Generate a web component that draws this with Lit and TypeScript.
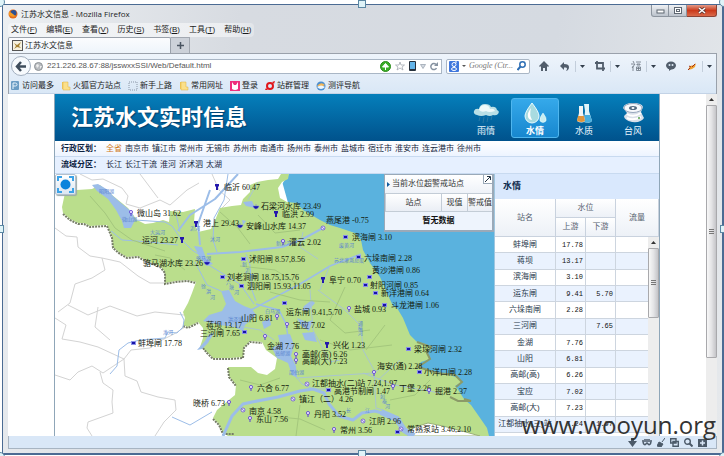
import { LitElement, html, svg, css } from "lit";
import { customElement, property } from "lit/decorators.js";
import { classMap } from "lit/directives/class-map.js";

type Kind = "pin" | "pinlight" | "gate" | "basin" | "ring";
type Station = [string, number, number, Kind, number, number];

// label, label x, label middle y, marker kind, marker x, marker y
const STATIONS: Station[] = [
  ["临沂 60.47", 224, 187, "pin", 217, 187],
  ["石梁河水库 23.49", 261, 206, "basin", 256, 207],
  ["临洪 2.99", 282, 214, "pin", 276, 214],
  ["燕尾港 -0.75", 326, 220, "ring", 323, 228],
  ["安峰山水库 14.37", 246, 226, "basin", 240, 226],
  ["港上 29.43", 203, 223, "pin", 196, 224],
  ["微山岛 31.62", 137, 213, "pinlight", 131, 213],
  ["运河 23.27", 142, 240, "pin", 182, 240],
  ["滨海闸 3.10", 352, 237, "gate", 345, 237],
  ["灌云 2.02", 289, 242, "pinlight", 283, 242],
  ["沭阳闸 8.57,8.56", 249, 259, "gate", 243, 259],
  ["六垛南闸 2.28", 364, 258, "gate", 358, 257],
  ["黄沙港闸 0.86", 372, 270, "gate", 369, 277],
  ["骆马湖水库 23.26", 143, 263, "basin", 207, 263],
  ["刘老涧闸 18.75,15.76", 227, 277, "gate", 222, 277],
  ["泗阳闸 15.93,11.05", 247, 286, "gate", 241, 286],
  ["阜宁 0.70", 329, 280, "pin", 323, 280],
  ["射阳河闸 0.85", 370, 285, "gate", 365, 285],
  ["新洋港闸 0.64", 381, 293, "gate", 375, 293],
  ["斗龙港闸 1.06", 391, 305, "gate", 384, 305],
  ["运东闸 9.41,5.70", 286, 312, "gate", 284, 303],
  ["盐城 0.93", 354, 309, "pinlight", 349, 309],
  ["山阳 6.81", 241, 318, "pinlight", 277, 317],
  ["宝应 7.02", 293, 325, "pinlight", 287, 325],
  ["蒋坝 13.17", 206, 325, "gate", 244, 332],
  ["三河闸 7.65", 200, 333, "gate", 244, 332],
  ["蚌埠闸 17.78", 138, 343, "gate", 133, 343],
  ["金湖 7.76", 267, 346, "pinlight", 265, 337],
  ["兴化 1.23", 333, 345, "pin", 327, 345],
  ["高邮(高) 6.26", 302, 354, "pinlight", 296, 355],
  ["高邮(大) 7.23", 302, 361, "pinlight", 296, 361],
  ["梁垛河闸 2.32", 414, 349, "gate", 408, 349],
  ["海安(通) 2.28", 377, 366, "pinlight", 374, 373],
  ["小洋口闸 2.28", 424, 372, "gate", 419, 372],
  ["江都抽水(二)站 7.24,1.97", 312, 383, "ring", 307, 384],
  ["高港节制闸 1.47", 334, 391, "gate", 328, 390],
  ["丁堡 2.26", 399, 388, "pinlight", 393, 387],
  ["掘港 2.37", 435, 391, "pinlight", 429, 391],
  ["六合 6.77", 257, 388, "pinlight", 251, 388],
  ["镇江（二）4.26", 299, 399, "ring", 293, 399],
  ["晓桥 6.73", 193, 403, "pinlight", 229, 403],
  ["南京 4.58", 249, 411, "ring", 243, 410],
  ["东山 7.56", 256, 419, "pinlight", 250, 419],
  ["丹阳 3.52", 314, 414, "pinlight", 308, 414],
  ["江阴 2.96", 369, 421, "ring", 363, 421],
  ["常州 3.56", 340, 430, "pinlight", 334, 430],
  ["常熟泵站 3.46,2.10", 407, 429, "gate", 397, 432],
];

const WATERS: [string, number, number][] = [
  ["昭阳湖", 99, 193], ["微山湖", 122, 221], ["大运河", 150, 234], ["沂河", 190, 230],
  ["沭河", 210, 241], ["骆马湖", 196, 260], ["新沂河", 276, 245], ["废黄河", 339, 247],
  ["苏北灌溉总渠", 334, 262], ["白马湖", 265, 313], ["洪泽湖", 228, 321], ["高邮湖", 275, 355],
  ["邵伯湖", 289, 374], ["淮河", 163, 334], ["徐", 201, 288], ["洪", 206, 293], ["河", 210, 299],
  ["新", 242, 266], ["沂", 245, 272], ["河", 249, 278], ["六", 226, 284], ["塘", 229, 289], ["河", 234, 294],
  ["通", 358, 325], ["榆", 358, 330], ["河", 358, 335], ["如", 380, 398], ["泰", 382, 403], ["河", 385, 408],
  ["长", 346, 412], ["江", 365, 412],
];

const LAND =
  "M92 189 L77 190 65 193 62 207 63 213 70 219 78 223 84 223 90 226 107 225 112 237 113 247 120 253 127 257 138 256 147 261 160 266 165 272 165 283 176 281 187 280 196 282 192 293 188 303 183 312 185 318 183 325 188 327 198 322 203 328 203 338 200 347 207 352 213 358 230 358 243 357 244 347 250 341 262 342 266 350 277 358 275 369 267 375 258 373 251 367 228 367 229 376 236 385 235 395 224 404 217 410 213 418 219 424 223 433 228 436 489 436 487 428 478 415 471 405 464 399 457 388 455 386 462 382 458 378 450 375 437 373 427 370 418 367 421 362 430 359 427 353 431 347 423 343 417 342 410 335 403 318 397 308 393 306 387 293 380 277 370 263 363 250 361 240 355 233 340 228 330 225 320 220 303 210 297 203 287 202 280 198 278 188 282 182 288 179 289 174 281 174 278 179 268 180 257 182 250 185 250 192 243 199 241 205 232 206 220 208 216 218 211 229 198 232 194 222 195 209 183 212 170 211 169 222 163 220 153 223 145 224 137 220 128 208 112 195 100 185Z";

const MENUS: [string, string][] = [["文件", "F"], ["编辑", "E"], ["查看", "V"], ["历史", "S"], ["书签", "B"], ["工具", "T"], ["帮助", "H"]];

const LEVELS: [string, string, string][] = [
  ["蚌埠闸", "17.78", ""], ["蒋坝", "13.17", ""], ["滨海闸", "3.10", ""], ["运东闸", "9.41", "5.70"],
  ["六垛南闸", "2.28", ""], ["三河闸", "", "7.65"], ["金湖", "7.76", ""], ["山阳", "6.81", ""],
  ["高邮(高)", "6.26", ""], ["宝应", "7.02", ""], ["高邮(大)", "7.23", ""], ["江都抽水(三)站", "7.24", "1.97"],
];

const reset = css`
  * { box-sizing: border-box; }
  :host { font-family: "Liberation Sans", "Noto Sans CJK SC", sans-serif; font-size: 8px; line-height: 12px; }
  button { font: inherit; color: inherit; background: none; border: 0; padding: 0; margin: 0; }
  a { color: inherit; text-decoration: none; }
  svg { display: block; }
  table { border-collapse: separate; border-spacing: 0; table-layout: fixed; }
`;

@customElement("side-scroll")
class SideScroll extends LitElement {
  @property({ type: Number }) size = 70;
  static styles = [reset, css`
    :host { display: flex; flex-direction: column; width: 11px; background: #ededed; }
    .up { height: 11px; display: flex; align-items: center; justify-content: center; }
    .thumb { border: 1px solid #a9a9ac; border-radius: 1px; background: linear-gradient(90deg, #f8f8f8, #e4e4e6 50%, #c4c4c8);
      display: flex; align-items: center; justify-content: center; }
  `];
  render() {
    return html`<div class="up"><svg width="5" height="3"><path d="M0 3 2.500 0 5 3Z" fill="#333" /></svg></div>
      <div class="thumb" style="height:${this.size}%"><svg width="5" height="6"><path d="M0 .5H5M0 2.500H5M0 4.500H5" stroke="#777" /></svg></div>`;
  }
}

@customElement("water-map")
class WaterMap extends LitElement {
  static styles = [reset, css`
    :host { display: block; position: relative; overflow: hidden; background: #fff; }
    .canvas { width: 100%; height: 100%; }
    .label { font-family: "Liberation Serif", "Noto Sans CJK SC", serif; font-size: 8px; fill: #14200c; }
    .water { font-size: 5px; fill: #5b86cf; }
    .full { position: absolute; left: 0; top: 0; width: 21px; height: 21px; border: 1px solid #b5c0cc; border-radius: 2px;
      background: linear-gradient(#fff, #dbe6f2); display: flex; align-items: center; justify-content: center; box-shadow: 1px 1px 1px #9aa; }
    .alert { position: absolute; right: 0; top: 0; width: 110px; border: 1px solid #9aa9b8; border-width: 1px 2px 2px 1px; background: #fff; color: #333; }
    .alert-title { height: 18px; display: flex; align-items: center; padding-left: 2px; background: linear-gradient(#fff, #eef2f8); position: relative; }
    .arrow { margin-right: 2px; }
    .collapse { position: absolute; right: 0; top: 0; width: 9px; height: 9px; border: solid #9aa9b8; border-width: 0 0 1px 1px; background: #fff; }
    table { width: 100%; text-align: center; }
    th, td { padding: 0; white-space: nowrap; }
    th { height: 19px; font-weight: 400; border: solid #c3ccd6; border-width: 1px 0 1px 1px; background: linear-gradient(#fff, #eaeef5); }
    .c1 { width: 56px; } .c2 { width: 26px; }
    td { height: 18px; font-weight: 700; color: #111; background: #eef4fd; }
  `];

  marker(kind: Kind, x: number, y: number) {
    const t = `translate(${x} ${y})`;
    switch (kind) {
      case "gate": return svg`<g transform=${t}><rect x="-2" y="-2" width="5" height="4" fill="#8a8fe8" /><rect x="-1" y="-1" width="3" height="2" fill="#1713a8" /></g>`;
      case "basin": return svg`<path transform=${t} d="M-3-1H3Q2 2 0 2T-3-1ZM-1-2H1" fill="#1713a8" stroke="#6a6ee0" stroke-width=".5" />`;
      case "ring": return svg`<g transform=${t} stroke="#6a55d0" stroke-width=".8"><circle r="2" fill="#f4f2ff" /><path d="M-1.500-1 1.500 1" /></g>`;
      case "pin": return svg`<path transform=${t} d="M-2-3H2V-1L1 0V3H-1V0L-2-1Z" fill="#2419ac" />`;
      default: return svg`<g transform=${t}><path d="M0 0V3" stroke="#5a3fd0" /><circle cy="-1" r="1.600" fill="#e6dcff" stroke="#5a3fd0" stroke-width=".8" /></g>`;
    }
  }

  render() {
    return html`
      <svg class="canvas" viewBox="55 174 439 262" preserveAspectRatio="xMinYMin slice" role="img" aria-label="江苏水情地图">
        <path d="M280 174H2000V900H489V436L400 436 340 300 290 210Z" fill="#5ab2de" />
        <path d="M280 174H289L278 190 280 200 240 240H210V174Z" fill="#fff" />
        <g fill="none" stroke="#d3d3d3" stroke-width="1">
          <path d="M80 174 92 180 103 179 122 188 128 196 126 204 140 208 160 200 170 205 178 198 187 190 199 183" />
          <path d="M140 174 152 190 158 198 M212 174 219 190 230 200 222 208" />
          <path d="M55 228 66 236 77 237 78 247 90 256 102 258 105 270 92 278 75 284 70 303 58 312M102 258 120 262 138 276 150 283 165 283" />
          <path d="M62 339 80 342 98 347 124 359 103 373 92 366 78 372 70 380 55 375M62 339 66 325 55 318M100 372 103 383 113 390 112 402 113 413 88 422 87 428 92 436M124 359 125 376 137 381 141 392 158 397 175 400 176 410 164 422 155 436" />
          <path d="M124 359 131 350 150 348 160 341 174 334 185 327M68 305 88 315 110 306 137 316 155 312 184 315M98 307 95 327 110 340" />
        </g>
        <path d=${LAND} fill="#bade8c" />
        <path d="M63 213 70 219 78 223 84 223 90 226 107 225 112 237 113 247 120 253 127 257 138 256 147 261 160 266 165 272 165 283 176 281 187 280 196 282M183 325 188 327 198 322M203 347 207 352 213 358 230 358 243 357 244 347 250 341 262 342M228 367 229 376 236 385M213 418 219 424 223 433 234 433" transform="translate(0 1)" fill="none" stroke="#757d65" stroke-width="2" stroke-dasharray="2 1" />
        <path d="M417 342 431 347 427 353 430 359 418 367 437 373 455 375 462 382 456 387M450 397 458 401 471 401 464 399" fill="none" stroke="#8b9a68" stroke-width="2" />
        <g fill="#9cbde8">
          <path d="M92 185 98 184 108 190 113 196 121 203 132 212 135 220 131 228 124 228 122 221 116 210 108 199 97 191Z" />
          <path d="M194 246 202 247 206 258 213 264 207 266 200 258Z" />
          <path d="M221 291 229 290 235 301 244 306 252 309 256 315 245 325 243 331 234 327 220 325 203 321 209 315 222 311 226 304Z" />
          <path d="M278 335 290 334 294 345 291 356 296 366 297 378 292 375 288 363 277 358 272 348 280 344Z" />
          <path d="M304 306 312 300 315 303 308 311 302 311ZM297 318 307 322 313 320 309 331 301 326ZM302 333 314 332 317 342 305 340ZM262 322 270 318 271 325 264 329Z" />
          <path d="M243 202 252 201 255 208 246 206ZM242 220 246 221 243 225Z" />
          <path d="M197 350 205 341 209 334 214 333 208 343 202 349Z" />
        </g>
        <path d="M408 436 412 428 428 423 443 426 462 431 480 436Z" fill="#fff" stroke="#9ab077" />
        <g fill="none" stroke="#9cbde8" stroke-linejoin="round">
          <path d="M110 374 117 366 119 350 128 343 140 340 165 338 168 332 177 333 183 327 184 320 180 312" stroke-width="1" />
          <path d="M135 220 150 221 165 222 172 226 181 239 192 250 203 257" />
          <path d="M238 174 215 199 190 215 178 231M210 190 198 224 200 245" stroke-width="2" />
          <path d="M228 174 224 200 214 218 213 240 217 252M180 232 176 214M111 231 122 240 150 242 178 245" />
          <path d="M207 254 240 252 282 247 301 240 323 228" stroke-width="2" />
          <path d="M246 254 250 265 252 290 256 301M195 262 207 285 221 291M207 264 240 284 254 304" />
          <path d="M251 310 300 284 330 266 361 254M256 304 279 310 286 324 288 337" stroke-width="1.500" />
          <path d="M232 325 260 330 274 340M297 378 302 384 313 389 330 389M258 182 248 200M318 259 300 247 303 232M318 290 345 310 361 326 363 350 374 370 376 408 383 410M296 378 374 373 378 370M330 265 320 290M363 373 395 385 440 393M310 290 313 330 330 362 340 360M400 360 378 380" stroke-width="1" stroke="#a9c6cf" />
          <path d="M223 436 232 416 243 404 252 402 278 397 300 391 313 389 324 393 329 404 339 416 353 420 362 413 375 411 393 416 399 424 409 434" stroke-width="3" />
          <path d="M381 412 397 419 404 430 414 436" stroke-width="6" />
          <path d="M172 417 190 425 212 412" stroke-width="1" />
        </g>
        <g fill="none" stroke="#a4c77d" stroke-width="1">
          <path d="M90 196 105 213 115 228 132 240 165 251M155 255 170 258 185 270M220 212 238 228 250 244M258 215 275 233 300 230M240 266 275 270 304 288M270 292 300 300 330 302M345 287 330 320 345 333 370 330M385 325 366 350M240 380 260 385 280 378M320 340 350 350 392 345M260 415 300 419 325 430M300 405 296 436M430 380 415 395 390 400" />
        </g>
        ${WATERS.map(([n, x, y]) => svg`<text class="water" x=${x} y=${y}>${n}</text>`)}
        ${STATIONS.map(([n, x, y, k, mx, my]) => svg`${this.marker(k, mx, my)}<text class="label" x=${x} y=${y + 3}>${n}</text>`)}
        ${this.marker("ring", 401, 429)}
      </svg>
      <button class="full" aria-label="全图">
        <svg width="17" height="17" viewBox="0 0 17 17"><circle cx="8.500" cy="8.500" r="5" fill="#0c84dc" /><path d="M1 5V1H5M12 1H16V5M16 12V16H12M5 16H1V12" fill="none" stroke="#3ba3e8" stroke-width="2" /></svg>
      </button>
      <section class="alert">
        <div class="alert-title">
          <svg class="arrow" width="3" height="5"><path d="M0 0 3 2.500 0 5Z" fill="#125a9c" /></svg>当前水位超警戒站点
          <button class="collapse" aria-label="收起"><svg width="8" height="8"><path d="M1 7 6 2M3 1.500H6.500V5" fill="none" stroke="#234" /></svg></button>
        </div>
        <table><thead><tr><th class="c1">站点</th><th class="c2">现值</th><th>警戒值</th></tr></thead>
          <tbody><tr><td colspan="3">暂无数据</td></tr></tbody></table>
      </section>`;
  }
}

@customElement("level-panel")
class LevelPanel extends LitElement {
  static styles = [reset, css`
    :host { display: flex; flex-direction: column; background: #fff; color: #26374a; border-left: 1px solid #9fc6df; overflow: hidden; position: relative; }
    h2 { margin: 0; height: 25px; flex: none; font-size: 9px; line-height: 25px; padding-left: 8px; background: #d9e8fd; color: #0c2a4c; }
    .body { flex: 1; position: relative; padding-bottom: 3px; min-height: 0; }
    table { width: 100%; height: 100%; }
    th { font-weight: 400; padding: 0; height: 19px; border: solid #c9d2de; border-width: 0 1px 1px 0; background: linear-gradient(#fff, #edf1f7); color: #55606e; }
    td { padding: 0; border: solid #cdd5df; border-width: 0 1px 1px 0; line-height: 12px; text-align: center; white-space: nowrap; }
    .num { text-align: right; padding-right: 2px; font-family: "Liberation Mono", monospace; font-size: 7px; color: #111; }
    tr.alt td { background: #eaf2fe; }
    .c1 { width: 61px; } .c2 { width: 30px; }
    side-scroll { position: absolute; right: 0; top: 38px; bottom: 0; }
  `];
  render() {
    return html`<h2>水情</h2>
      <div class="body">
        <table>
          <colgroup><col class="c1" /><col class="c2" /><col class="c2" /><col /></colgroup>
          <thead><tr><th rowspan="2">站名</th><th colspan="2">水位</th><th rowspan="2">流量</th></tr><tr><th>上游</th><th>下游</th></tr></thead>
          <tbody>${LEVELS.map(([n, a, b], i) => html`<tr class=${classMap({ alt: i % 2 === 1 })}><td>${n}</td><td class="num">${a}</td><td class="num">${b}</td><td></td></tr>`)}</tbody>
        </table>
        <side-scroll .size=${35}></side-scroll>
      </div>`;
  }
}

@customElement("water-site")
class WaterSite extends LitElement {
  static styles = [reset, css`
    :host { display: flex; flex-direction: column; background: #fff; border: solid #8fa6b8; border-width: 0 1px; overflow: hidden; }
    header { height: 47px; flex: none; display: flex; align-items: center; justify-content: space-between; padding: 0 2px 0 16px; color: #fff;
      background: linear-gradient(#057fbb, #00528c); }
    h1 { margin: 0; font-size: 22px; line-height: 30px; font-weight: 700; text-shadow: 1px 1px 1px #00406f; white-space: nowrap; }
    nav { display: flex; gap: 1px; }
    nav a { width: 48px; height: 40px; display: flex; flex-direction: column; align-items: center; font-size: 9px; line-height: 12px; padding-top: 2px; color: #e8f4fc; border-radius: 3px; border: 1px solid transparent; }
    nav a.on { background: linear-gradient(#35a9ea, #1787cf); border-color: #4fb6ee; font-weight: 700; color: #fff; }
    .areas { height: 16px; flex: none; display: flex; align-items: center; gap: 3px; padding-left: 6px; border-bottom: 1px solid #c8daf0; color: #16263c; background: linear-gradient(#fff, #edf4ff); white-space: nowrap; }
    .areas.low { background: #e6f0ff; height: 17px; }
    .areas b { width: 42px; color: #0b2140; }
    .areas .on { color: #d0781a; }
    .main { flex: 1; min-height: 0; display: flex; }
    water-map { flex: 1; min-width: 0; }
    level-panel { width: 165px; }
  `];
  render() {
    const cities = ["全省", "南京市", "镇江市", "常州市", "无锡市", "苏州市", "南通市", "扬州市", "泰州市", "盐城市", "宿迁市", "淮安市", "连云港市", "徐州市"];
    return html`
      <header><h1>江苏水文实时信息</h1>
        <nav>
          <a href="#rain"><svg width="28" height="24" viewBox="0 0 28 24"><path d="M5 14q-4-1-3-4t5-2q1-5 6-5 5 0 6 3 5-1 6 3 3 1 1 4-2 2-5 1-3 2-7 0-5 2-9 0Z" fill="#b9dfe6" /><path d="M7 9q1-5 6-5 4 0 5 4 4-1 5 2-6 2-9 0-4 2-7-1Z" fill="#eefafa" /><path d="M8 16 7 20M12 16 11 22M16 16 15 21M20 15 19 19" stroke="#2a79a5" /></svg>雨情</a>
          <a class="on" href="#level"><svg width="28" height="24" viewBox="0 0 28 24"><path d="M11 2Q18 11 18 15A7 7 0 0 1 4 15Q4 11 11 2Z" fill="#a8dbe0" stroke="#e7fbff" /><path d="M10 7Q6 12 7 16 8 19 11 19 8 14 10 7Z" fill="#fff" /><path d="M22 12Q26 17 25 20 22 23 19 20 18 17 22 12Z" fill="#c9edf0" stroke="#eaffff" stroke-width=".5" /></svg>水情</a>
          <a href="#quality"><svg width="28" height="24" viewBox="0 0 28 24"><path d="M14 3H19V10L22 20Q20 23 14 21L15 10Z" fill="#dff4fa" /><path d="M15 14H20L22 20Q19 23 14 21Z" fill="#46aede" /><path d="M9 5H13V12L15 20Q12 23 7 20L9 12Z" fill="#f1f5f5" /><path d="M8 15H14L15 20Q12 22 7 20Z" fill="#e0953c" /></svg>水质</a>
          <a href="#typhoon"><svg width="28" height="24" viewBox="0 0 28 24"><path d="M4 7Q5 2 14 2T24 6L22 11 25 17Q22 22 13 21 5 19 5 15L8 12Z" fill="#d9dfe9" /><ellipse cx="14" cy="7" rx="9" ry="4.500" fill="#f7f9fc" stroke="#97a7bd" /><ellipse cx="14" cy="7" rx="4" ry="2" fill="#54697f" /><ellipse cx="14" cy="7" rx="1.500" ry="1" fill="#fff" /><path d="M8 13Q14 17 22 12M8 17Q14 20 22 16" fill="none" stroke="#fff" stroke-width="2" /><circle cx="20" cy="17" r="1" fill="#55a34a" /></svg>台风</a>
        </nav>
      </header>
      <div class="areas"><b>行政区划：</b>${cities.map((c, i) => html`<a href="#c${i}" class=${classMap({ on: i === 0 })}>${c}</a>`)}</div>
      <div class="areas low"><b>流域分区：</b>${["长江", "长江干流", "淮河", "沂沭泗", "太湖"].map((c, i) => html`<a href="#b${i}">${c}</a>`)}</div>
      <div class="main"><water-map></water-map><level-panel></level-panel></div>`;
  }
}

@customElement("app-root")
class AppRoot extends LitElement {
  static styles = [reset, css`
    :host { display: block; }
    .stage { position: relative; min-height: 100vh; display: flex; padding: 4px 0 1px 2px; background: #fff; overflow: hidden; }
    .window { flex: 1; min-width: 0; display: flex; flex-direction: column; border: solid #4b6b93; border-width: 1px 2px 2px 1px; padding: 0 5px 4px 5px;
      background: linear-gradient(100deg, #eceff2, #d7dbe1 30%, #d5dae1 70%, #e6e9ec); color: #1c1c1c; }
    .title { height: 18px; display: flex; justify-content: space-between; font-family: "Open Sans", "Noto Sans CJK SC", sans-serif; }
    .name { display: flex; align-items: center; gap: 3px; }
    .controls { display: flex; height: 12px; }
    .controls button { width: 18px; border: 1px solid #8c949e; border-top: 0; border-left-width: 0; background: linear-gradient(#eef0f3, #bcc3cc); display: flex; align-items: center; justify-content: center; }
    .controls .min { border-left-width: 1px; border-radius: 0 0 0 3px; }
    .controls .close { width: 30px; border-radius: 0 0 3px 0; background: linear-gradient(#e39a87, #cb3a1b 50%, #d9694a); border-color: #8d4234; }
    .menu { height: 14px; display: flex; align-items: center; gap: 9px; padding-left: 3px; width: 246px; background: linear-gradient(90deg, #f3f5f7, #eceef1 90%, #e2e5e9); border-radius: 4px; }
    .menu button, .marks button { white-space: nowrap; }
    .tabs { display: flex; height: 16px; align-items: stretch; }
    .tab { width: 163px; display: flex; align-items: center; gap: 2px; padding-left: 3px; background: linear-gradient(#fbfcfe, #eef4fb); border: 1px solid #9aa1ab; border-bottom: 0; border-radius: 2px 2px 0 0; }
    .plus { width: 19px; border: 1px solid #a3a9b2; border-left: 0; border-bottom: 0; display: flex; align-items: center; justify-content: center; background: #ccd1d9; }
    .chrome { border: 1px solid #9aa1ab; border-bottom: 0; background: linear-gradient(#eef4fb, #d9e7f6); }
    .bar { height: 24px; display: flex; align-items: center; padding: 0 4px 0 2px; }
    .back { width: 20px; height: 20px; border: 1px solid #a2afbf; border-radius: 10px; background: #f7fafd; display: flex; align-items: center; justify-content: center; z-index: 1; }
    .address { flex: 1; min-width: 0; height: 15px; margin-left: -4px; margin-right: 4px; padding: 0 3px 0 6px; border: 1px solid #a9b6c5; background: #fff; display: flex; align-items: center; gap: 4px; }
    input { border: 0; padding: 0; margin: 0; background: none; font: inherit; min-width: 0; outline: 0; flex: 1; }
    .address input { color: #555; }
    .search { width: 84px; height: 15px; border: 1px solid #a9b6c5; border-radius: 2px; background: #fff; display: flex; align-items: center; gap: 3px; padding: 0 3px 0 2px; }
    .search input { font-style: italic; color: #777; font-family: "Liberation Serif", "Noto Sans CJK SC", serif; }
    .tools { display: flex; align-items: center; width: 182px; justify-content: space-between; padding-left: 9px; }
    .drop { display: flex; align-items: center; gap: 5px; }
    .sep { padding-left: 4px; border-left: 1px solid #c3cedb; height: 11px; display: flex; align-items: center; }
    .marks { height: 16px; display: flex; align-items: center; gap: 7px; padding-left: 1px; border-bottom: 1px solid #c3d3e6; }
    .marks button { display: flex; align-items: center; gap: 2px; }
    .view { flex: 1; min-height: 0; display: flex; background: #fff; }
    water-site { flex: 1; margin: 0 46px 0 46px; min-width: 0; }
    .status { height: 13px; display: flex; justify-content: flex-end; align-items: center; gap: 5px; padding-right: 9px; background: #d9e7f7; border: 1px solid #a7b4c2; border-top: 0; }
    .mark { position: absolute; right: 8px; bottom: 13px; font-family: "Open Sans", sans-serif; font-size: 24px; line-height: 36px; color: #333; }
    .handle { position: absolute; width: 8px; height: 8px; border: 1px solid #5b87a3; background: #dff3f8; }
    .round { border-radius: 5px; width: 10px; height: 10px; }
    .n { top: 0; left: 50%; margin-left: -4px; } .s { bottom: -2px; left: 50%; margin-left: -4px; }
    .w { left: -4px; top: 50%; margin-top: -3px; } .e { right: -4px; top: 50%; margin-top: -3px; }
    .nw { left: -5px; top: -3px; } .ne { right: -5px; top: -3px; } .sw { left: -5px; bottom: -6px; } .se { right: -5px; bottom: -6px; }
  `];

  drop(icon: unknown) {
    return html`<div class="drop">${icon}<button class="sep" aria-label="更多"><svg width="5" height="3"><path d="M0 0H5L2.500 3Z" fill="#333f4c" /></svg></button></div>`;
  }

  render() {
    const folder = svg`<path d="M1 1H5L6 2V8H1Z" fill="#f0c95c" /><path d="M2 1H7V6H9V9H2Z" fill="#fbe08a" stroke="#dcb040" stroke-width=".5" />`;
    const marks: [string, unknown][] = [
      ["访问最多", svg`<rect x="1" y="0" width="8" height="9" rx="1" fill="#6a9cc4" /><path d="M3 8V2H5.500A1.500 1.500 0 0 1 5.500 5H3" stroke="#e8f4fc" fill="none" />`],
      ["火狐官方站点", folder],
      ["新手上路", svg`<rect x="1" y="1" width="8" height="8" fill="none" stroke="#8b97a6" stroke-dasharray="1 1" />`],
      ["常用网址", folder],
      ["登录", svg`<rect width="10" height="10" fill="#ee2f7d" /><path d="M2 1 4 4 6 4 8 1V8Q5 10 2 8Z" fill="#fff" />`],
      ["站群管理", svg`<circle cx="5" cy="5" r="3" fill="none" stroke="#e0161b" stroke-width="2" /><path d="M7 1 10 0 9 3M0 9 1 7 3 9Z" fill="#e0161b" />`],
      ["测评导航", svg`<circle cx="5" cy="5" r="4.500" fill="#4b8ed0" /><path d="M1 5Q5 0 9 4L5 6Z" fill="#f3b658" /><path d="M1 6Q5 3 9 6 5 10 1 6Z" fill="#eef6fc" />`],
    ];
    return html`
      <div class="stage">
        <div class="window">
          <div class="title">
            <div class="name"><svg width="10" height="10"><circle cx="5" cy="5" r="4.500" fill="#e36b1c" /><circle cx="5.500" cy="4" r="3" fill="#2a4f94" /><path d="M1 3Q3 3 5 5T8 7Q4 9 1 6Z" fill="#f49b26" /></svg>江苏水文信息 - Mozilla Firefox</div>
            <div class="controls">
              <button class="min" aria-label="最小化"><svg width="9" height="6"><rect x="1" y="2" width="7" height="3" fill="#fff" stroke="#5d6670" /></svg></button>
              <button aria-label="最大化"><svg width="8" height="7"><rect x=".5" y=".5" width="7" height="6" fill="#fff" stroke="#5d6670" /><rect x="2.500" y="2.500" width="3" height="2" fill="none" stroke="#5d6670" /></svg></button>
              <button class="close" aria-label="关闭"><svg width="8" height="7"><path d="M1 1 7 6M7 1 1 6" stroke="#5f3a36" stroke-width="3" /><path d="M1 1 7 6M7 1 1 6" stroke="#fff" stroke-width="1.500" /></svg></button>
            </div>
          </div>
          <div class="menu">${MENUS.map(([n, k]) => html`<button>${n}(<u>${k}</u>)</button>`)}</div>
          <div class="tabs">
            <button class="tab"><svg width="11" height="11"><rect x=".5" y=".5" width="10" height="10" fill="#f6f1e0" stroke="#555" /><path d="M2 3 5 5 9 2 7 6 9 8 5 7 2 9 4 6Z" fill="#a68232" /></svg>江苏水文信息</button>
            <button class="plus" aria-label="新标签页"><svg width="7" height="7"><path d="M3.500 0V7M0 3.500H7" stroke="#4a5562" stroke-width="1.500" /></svg></button>
          </div>
          <div class="chrome">
            <div class="bar">
              <button class="back" aria-label="后退"><svg width="12" height="11"><path d="M6 1 2 5.500 6 10M2 5.500H11" stroke="#3f4d5c" stroke-width="2.500" fill="none" /></svg></button>
              <div class="address">
                <svg width="9" height="9"><circle cx="4.500" cy="4.500" r="4" fill="#b9bcc0" stroke="#8e9297" /><path d="M2 3 4 2 5 4 3 6ZM6 4 8 4 6 7Z" fill="#eee" /></svg>
                <input aria-label="网址" .value=${"221.226.28.67:88/jsswxxSSI/Web/Default.html"} />
                <svg width="11" height="11"><circle cx="5.500" cy="5.500" r="5" fill="#3aae27" stroke="#2a8a1b" /><path d="M5.500 9V5M2.500 6 5.500 2.500 8.500 6Z" fill="#fff" stroke="#fff" /></svg>
                <svg width="10" height="10"><path d="M5 1 6 4H9.500L7 6 8 9 5 7 2 9 3 6 .5 4H4Z" fill="#fff" stroke="#a5abb2" stroke-width=".8" /></svg>
                <svg width="7" height="10"><rect width="7" height="10" rx="1" fill="#26303c" /><rect x="1" y="1" width="5" height="7" fill="#64b4e8" /></svg>
                <svg width="6" height="5"><path d="M.5 .5H5.500L3 4.500Z" fill="#d5dbe2" stroke="#9aa5b1" stroke-width=".8" /></svg>
                <svg width="8" height="9"><path d="M6 2.500A3 3 0 1 0 6.500 6" fill="none" stroke="#8793a1" stroke-width="1.500" /><path d="M8 0V4H4Z" fill="#8793a1" /></svg>
              </div>
              <div class="search">
                <svg width="10" height="11"><rect width="10" height="11" rx="1" fill="#3f77dd" /><circle cx="5" cy="3.500" r="2" fill="none" stroke="#fff" /><ellipse cx="5" cy="8" rx="2.500" ry="1.500" fill="none" stroke="#fff" /><path d="M6 1 8 1M5 5 6 6" stroke="#fff" /></svg>
                <svg width="4" height="3"><path d="M0 0H4L2 2Z" fill="#555" /></svg>
                <input aria-label="搜索" .value=${"Google (Ctr..."} />
                <svg width="9" height="10"><circle cx="5.500" cy="3.500" r="2.700" fill="none" stroke="#2f6fb5" stroke-width="1.500" /><path d="M3.500 5.500 .5 9" stroke="#2f6fb5" stroke-width="2" /></svg>
              </div>
              <div class="tools">
                <svg width="10" height="10"><path d="M0 5 5 0 10 5 9 6 8 5V10H6V7H4V10H2V5L1 6Z" fill="#515d6b" /></svg>
                ${this.drop(html`<svg width="10" height="9"><path d="M4 0V2Q9 2 9 5 9 8 6 9 8 6 6 5.500H4V8L0 4Z" fill="#515d6b" /></svg>`)}
                ${this.drop(html`<svg width="10" height="10"><path d="M2 0V7.500H10M0 2H8V10" fill="none" stroke="#515d6b" stroke-width="1.800" /></svg>`)}
                ${this.drop(html`<svg width="10" height="10"><path d="M0 3H4L1 7M2 5V10M2 0 3 2M5 1H10M6 3H9V4H6ZM5.500 6H9.500V9.500H5.500ZM7.500 6V9M6 7.500H9" fill="none" stroke="#6b7580" stroke-width=".8" /></svg>`)}
                <svg width="10" height="10"><ellipse cx="5" cy="4.500" rx="5" ry="4" fill="#515d6b" /><path d="M3 7V10L7 7Z" fill="#515d6b" /><circle cx="3.500" cy="4" r="1" fill="#dde8f4" /><circle cx="6.500" cy="4" r="1" fill="#dde8f4" /></svg>
                ${this.drop(html`<svg width="10" height="9"><path d="M1 8 3 4 7 3 9 1 8 5 5 7Z" fill="#f0a22e" /><path d="M2 4 4 5M5 5 8 2M1 8 3 6" stroke="#a12f1b" /></svg>`)}
              </div>
            </div>
            <div class="marks">${marks.map(([n, i]) => html`<button><svg width="10" height="10">${i}</svg>${n}</button>`)}</div>
          </div>
          <div class="view"><water-site></water-site><side-scroll .size=${74}></side-scroll></div>
          <div class="status">
            <svg width="9" height="9"><path d="M3 0H6V3H9L4.500 9 0 3H3Z" fill="#4c5a69" /></svg>
            <svg width="10" height="7"><path d="M0 2H10M1 3Q2 7 4 5 5 3 6 5 8 7 9 3M2 0H8" fill="none" stroke="#4c5a69" stroke-width="1.500" /></svg>
            <svg width="8" height="9"><path d="M8 0 5 4M2 4 6 6 4 9 0 8Z" fill="#4c5a69" stroke="#4c5a69" /></svg>
            <svg width="9" height="9"><path d="M.7 .7H6V5H.7ZM3 3.500H8.300V8.300H3Z" fill="#d9e7f7" stroke="#4c5a69" stroke-width="1.400" /></svg>
            <svg width="9" height="9"><circle cx="3.500" cy="3.500" r="2.800" fill="none" stroke="#4c5a69" stroke-width="1.400" /><path d="M5.500 5.500 8.500 8.500" stroke="#4c5a69" stroke-width="2" /></svg>
            <svg width="9" height="9"><path d="M0 1H9V9H0Z" fill="#4c5a69" /><path d="M4.500 2.500V7.500M2 5H7" stroke="#d9e7f7" stroke-width="1.500" /></svg>
          </div>
        </div>
        <div class="mark">www.wooyun.org</div>
        ${["n", "s", "w", "e"].map((c) => html`<i class="handle ${c}"></i>`)}
        ${["nw", "ne", "sw", "se"].map((c) => html`<i class="handle round ${c}"></i>`)}
      </div>`;
  }
}
